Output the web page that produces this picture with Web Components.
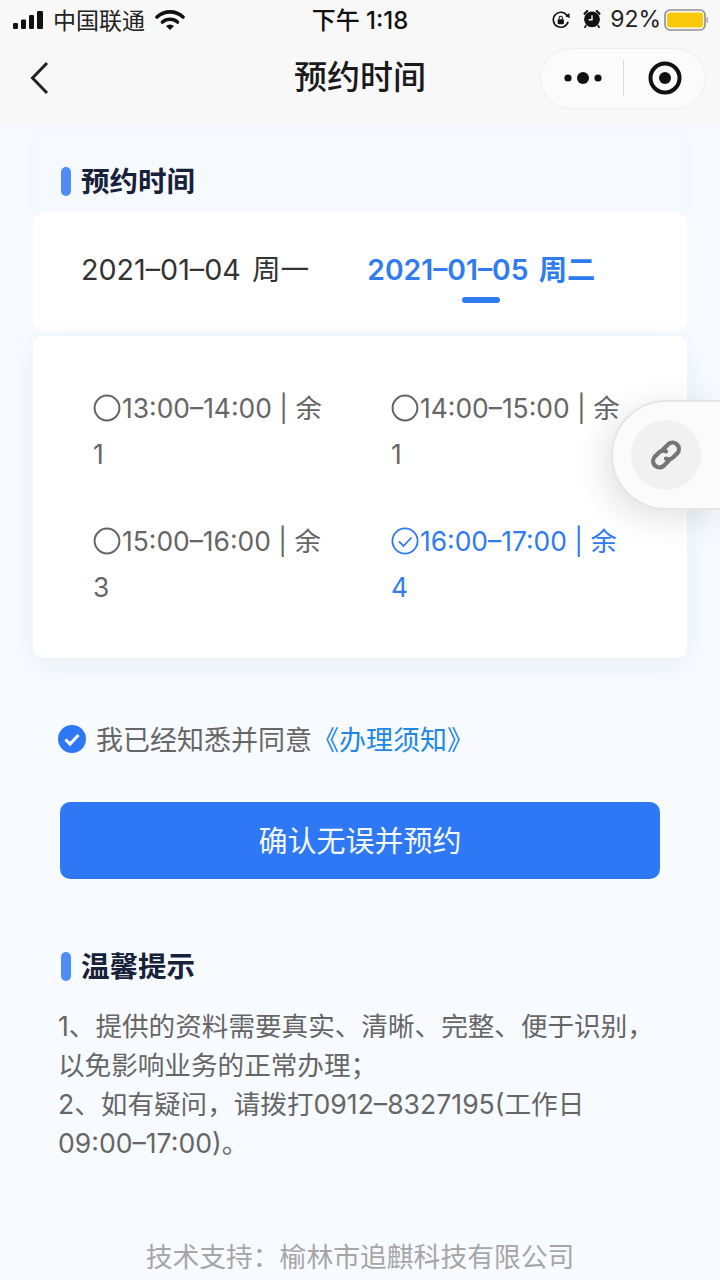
<!DOCTYPE html>
<html lang="zh">
<head>
<meta charset="utf-8">
<title>预约时间</title>
<style>
  html, body { margin: 0; padding: 0; }
  body {
    width: 720px; height: 1280px; overflow: hidden; position: relative;
    background: #f7faff;
    font-family: Inter, "Noto Sans CJK SC", sans-serif;
  }
  main { display: block; padding: 11px 33px 0; }
</style>
</head>
<body>
<status-bar></status-bar>
<nav-bar>预约时间</nav-bar>
<main>
  <section-title boxed>预约时间</section-title>
  <date-tabs></date-tabs>
  <slot-card>
    <time-slot>13:00–14:00 | 余 1</time-slot>
    <time-slot>14:00–15:00 | 余 1</time-slot>
    <time-slot>15:00–16:00 | 余 3</time-slot>
    <time-slot checked>16:00–17:00 | 余 4</time-slot>
  </slot-card>
  <agree-row></agree-row>
  <primary-button>确认无误并预约</primary-button>
  <section-title>温馨提示</section-title>
  <tips-text>
    1、提供的资料需要真实、清晰、完整、便于识别，<br>以免影响业务的正常办理；<br>2、如有疑问，请拨打0912–8327195(工作日<br>09:00–17:00)。
  </tips-text>
  <page-footer>技术支持：榆林市追麒科技有限公司</page-footer>
</main>
<float-link></float-link>

<script>
class StatusBar extends HTMLElement {
  connectedCallback() {
    this.attachShadow({ mode: 'open' }).innerHTML = `
      <style>
        :host { display: flex; align-items: center; height: 40px; background: #f8f8f8; color: #111; position: relative; padding: 0 12px; box-sizing: border-box; }
        .left, .right { display: flex; align-items: center; flex: 1; }
        .right { justify-content: flex-end; }
        .carrier { font-size: 23px; margin-left: 8px; color: #222; padding-bottom: 2px; }
        .wifi { margin-left: 10px; }
        .time { font-size: 24px; font-weight: 500; white-space: nowrap; padding-bottom: 3px; }
        .pct { font-size: 23px; margin: 0 3px 0 8px; color: #222; padding-bottom: 2px; }
        .alarm { margin: 0 0 3px 11px; }
        svg { display: block; }
      </style>
      <div class="left">
        <svg width="33" height="20" viewBox="0 0 33 20">
          <rect x="1" y="13" width="5" height="6" rx="1.2" fill="#111"/>
          <rect x="9" y="9.5" width="5" height="9.5" rx="1.2" fill="#111"/>
          <rect x="17" y="5" width="5" height="14" rx="1.2" fill="#111"/>
          <rect x="25" y="1" width="6" height="18" rx="1.2" fill="#111"/>
        </svg>
        <span class="carrier">中国联通</span>
        <svg class="wifi" width="30" height="22" viewBox="0 0 30 22">
          <path d="M2 8 A19 19 0 0 1 28 8" fill="none" stroke="#111" stroke-width="3.6" stroke-linecap="round"/>
          <path d="M7.5 13 A11.5 11.5 0 0 1 22.5 13" fill="none" stroke="#111" stroke-width="3.6" stroke-linecap="round"/>
          <path d="M11 17 A6 6 0 0 1 19 17 L15 21 Z" fill="#111"/>
        </svg>
      </div>
      <div class="time">下午 1:18</div>
      <div class="right">
        <svg width="20" height="20" viewBox="0 0 24 24">
          <path d="M20.5 14 A9 9 0 1 1 19.5 7" fill="none" stroke="#111" stroke-width="2"/>
          <path d="M17 7.5 L22.5 9.5 L22 3.5 Z" fill="#111"/>
          <rect x="8" y="11" width="7.5" height="6" rx="1" fill="#111"/>
          <path d="M9.7 11 V9.5 a2 2 0 0 1 4 0 V11" fill="none" stroke="#111" stroke-width="1.3"/>
        </svg>
        <svg class="alarm" width="20" height="21" viewBox="0 0 24 24">
          <circle cx="12" cy="13" r="9.5" fill="#111"/>
          <path d="M12 8 V13.5 H8" fill="none" stroke="#f8f8f8" stroke-width="1.7"/>
          <path d="M1.5 6 L6 1.5 L8 3 L3 8 Z M22.5 6 L18 1.5 L16 3 L21 8 Z" fill="#111"/>
          <path d="M5 20 L3 23 M19 20 L21 23" stroke="#111" stroke-width="2"/>
        </svg>
        <span class="pct">92%</span>
        <svg width="44" height="22" viewBox="0 0 44 22">
          <rect x="1" y="1" width="40" height="20" rx="5" fill="none" stroke="#8e8e8e" stroke-width="1.6"/>
          <rect x="3" y="3.5" width="36" height="15" rx="3" fill="#fcc90a"/>
          <path d="M42.5 8 a3 3 0 0 1 0 6 Z" fill="#aaa"/>
        </svg>
      </div>`;
  }
}

class NavBar extends HTMLElement {
  connectedCallback() {
    this.attachShadow({ mode: 'open' }).innerHTML = `
      <style>
        :host { display: grid; grid-template-columns: 166px 1fr 166px; align-items: center; height: 84px; background: #f8f8f8; padding: 0 14px 8px; box-sizing: border-box; }
        .back { margin-left: 16px; }
        .title { font-size: 33px; font-weight: 500; color: #1a1a1a; text-align: center; padding-bottom: 6px; }
        .capsule { display: flex; align-items: center; width: 166px; height: 61px; box-sizing: border-box; background: #fbfbfb; border: 1px solid #eeeeee; border-radius: 31px; }
        .more { width: 82px; display: flex; justify-content: center; padding-left: 1px; box-sizing: border-box; }
        .sep { width: 1px; height: 36px; background: #d9d9d9; }
        .close { flex: 1; display: flex; justify-content: center; }
        svg { display: block; }
      </style>
      <svg class="back" width="20" height="34" viewBox="0 0 20 34"><path d="M17 2 L2.5 17 L17 32" fill="none" stroke="#222" stroke-width="3"/></svg>
      <div class="title"><slot></slot></div>
      <div class="capsule">
        <div class="more"><svg width="38" height="14" viewBox="0 0 38 14"><circle cx="4" cy="7" r="3.6" fill="#111"/><circle cx="19" cy="7" r="6" fill="#111"/><circle cx="34" cy="7" r="3.6" fill="#111"/></svg></div>
        <div class="sep"></div>
        <div class="close"><svg width="34" height="34" viewBox="0 0 34 34"><circle cx="17" cy="17" r="14.5" fill="none" stroke="#111" stroke-width="4"/><circle cx="17" cy="17" r="6" fill="#111"/></svg></div>
      </div>`;
  }
}

class SectionTitle extends HTMLElement {
  connectedCallback() {
    this.attachShadow({ mode: 'open' }).innerHTML = `
      <style>
        :host { display: flex; align-items: center; gap: 10px; height: 78px; padding-left: 28px; box-sizing: border-box; font-size: 28.5px; font-weight: 700; color: #16213a; border-radius: 10px 10px 0 0; }
        :host([boxed]) { padding-top: 15px; background: #f6f9fe; box-shadow: 0 0 20px rgba(120,140,190,.05); }
        :host(:not([boxed])) { margin-top: 48px; }
        i { display: block; width: 10px; height: 29px; border-radius: 5px; background: #4f8cf7; }
        span { padding-bottom: 4px; }
      </style>
      <i></i><span><slot></slot></span>`;
  }
}

class DateTabs extends HTMLElement {
  connectedCallback() {
    this.attachShadow({ mode: 'open' }).innerHTML = `
      <style>
        :host { display: flex; gap: 58px; height: 118px; padding: 0 48px; box-sizing: border-box; background: #fff; border-radius: 10px; font-size: 28.7px; color: #333; word-spacing: 3px; }
        .tab { position: relative; padding-top: 36px; line-height: 42px; white-space: nowrap; }
        .on { color: #2f7bf0; font-weight: 600; font-size: 28.3px; }
        .on::after { content: ""; position: absolute; left: 50%; top: 84px; width: 38px; height: 6px; margin-left: -19px; border-radius: 3px; background: #2f7bf0; }
      </style>
      <div class="tab">2021–01–04 周一</div>
      <div class="tab on">2021–01–05 周二</div>`;
  }
}

class SlotCard extends HTMLElement {
  connectedCallback() {
    this.attachShadow({ mode: 'open' }).innerHTML = `
      <style>
        :host { display: grid; grid-template-columns: 298px 1fr; row-gap: 41px; margin-top: 5px; height: 322px; padding: 49px 0 0 60px; box-sizing: border-box; align-content: start; background: #fff; border-radius: 10px; box-shadow: 0 6px 24px rgba(120,140,190,.10); }
      </style>
      <slot></slot>`;
  }
}

class TimeSlot extends HTMLElement {
  connectedCallback() {
    const checked = this.hasAttribute('checked');
    const icon = checked
      ? '<circle cx="14" cy="14" r="12.6" fill="none" stroke="#2f7bf0" stroke-width="1.8"/><path d="M8 14.5 L12.5 19 L20.5 10.5" fill="none" stroke="#2f7bf0" stroke-width="1.8"/>'
      : '<circle cx="14" cy="14" r="12.4" fill="none" stroke="#666" stroke-width="2"/>';
    this.attachShadow({ mode: 'open' }).innerHTML = `
      <style>
        :host { display: block; width: 235px; font-size: 26.4px; line-height: 46px; color: ${checked ? '#2f7bf0' : '#666'}; }
        svg { display: inline-block; vertical-align: -4px; }
      </style>
      <svg width="29" height="28" viewBox="0 0 29 28">${icon}</svg><slot></slot>`;
  }
}

class AgreeRow extends HTMLElement {
  connectedCallback() {
    this.attachShadow({ mode: 'open' }).innerHTML = `
      <style>
        :host { display: flex; align-items: center; gap: 10px; margin: 60px 0 0 25px; height: 42px; font-size: 27px; color: #666; white-space: nowrap; }
        span { padding-bottom: 2px; }
        a { color: #1e88e5; }
        svg { display: block; }
      </style>
      <svg width="28" height="28" viewBox="0 0 28 28"><circle cx="14" cy="14" r="14" fill="#2e78f6"/><path d="M7.5 14.5 L12 19 L20.5 10" fill="none" stroke="#fff" stroke-width="3"/></svg>
      <span>我已经知悉并同意<a>《办理须知》</a></span>`;
  }
}

class PrimaryButton extends HTMLElement {
  connectedCallback() {
    this.attachShadow({ mode: 'open' }).innerHTML = `
      <style>
        :host { display: flex; align-items: center; justify-content: center; margin: 42px 27px 0; height: 77px; padding-bottom: 4px; box-sizing: border-box; background: #2e78f6; border-radius: 10px; color: #f4f8ff; font-size: 29px; }
      </style>
      <slot></slot>`;
  }
}

class TipsText extends HTMLElement {
  connectedCallback() {
    this.attachShadow({ mode: 'open' }).innerHTML = `
      <style>
        :host { display: block; margin: 2px 0 0 25px; font-size: 26.6px; line-height: 39px; color: #666; white-space: nowrap; }
      </style>
      <slot></slot>`;
  }
}

class PageFooter extends HTMLElement {
  connectedCallback() {
    this.attachShadow({ mode: 'open' }).innerHTML = `
      <style>
        :host { display: block; margin-top: 74px; text-align: center; font-size: 26.8px; line-height: 40px; color: #a6a6a6; }
      </style>
      <slot></slot>`;
  }
}

class FloatLink extends HTMLElement {
  connectedCallback() {
    this.attachShadow({ mode: 'open' }).innerHTML = `
      <style>
        :host { position: absolute; left: 611px; top: 400px; width: 109px; height: 110px; box-sizing: border-box; display: flex; align-items: center; padding-left: 18px; background: #fbfbfb; border: 2px solid #e6e6e6; border-right: 0; border-radius: 55px 0 0 55px; box-shadow: -6px 8px 34px rgba(0,0,0,.12); }
        .round { width: 70px; height: 70px; border-radius: 50%; background: #f1f1f1; display: flex; align-items: center; justify-content: center; }
        svg { display: block; }
      </style>
      <div class="round">
        <svg width="36" height="36" viewBox="0 0 36 36" fill="none" stroke="#757575" stroke-width="4.2" stroke-linecap="round">
          <path d="M15 12.5 L20.5 7 a6.4 6.4 0 0 1 9 9 L25 20.5 a6.4 6.4 0 0 1 -7 1.2"/>
          <path d="M21 23.5 L15.5 29 a6.4 6.4 0 0 1 -9 -9 L11 15.5 a6.4 6.4 0 0 1 7 -1.2"/>
        </svg>
      </div>`;
  }
}

customElements.define('status-bar', StatusBar);
customElements.define('nav-bar', NavBar);
customElements.define('section-title', SectionTitle);
customElements.define('date-tabs', DateTabs);
customElements.define('slot-card', SlotCard);
customElements.define('time-slot', TimeSlot);
customElements.define('agree-row', AgreeRow);
customElements.define('primary-button', PrimaryButton);
customElements.define('tips-text', TipsText);
customElements.define('page-footer', PageFooter);
customElements.define('float-link', FloatLink);
</script>
</body>
</html>
